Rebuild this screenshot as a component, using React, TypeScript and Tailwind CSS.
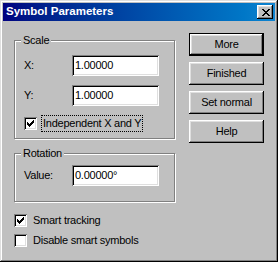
import React from "react";

const font = { fontFamily: '"Liberation Sans", Arial, sans-serif' };

const raised =
  "shadow-[inset_-1px_-1px_#000,inset_1px_1px_#fff,inset_-2px_-2px_#808080,inset_2px_2px_#dfdfdf]";
const sunken =
  "shadow-[inset_1px_1px_#808080,inset_-1px_-1px_#fff,inset_2px_2px_#000,inset_-2px_-2px_#dfdfdf]";

function CloseGlyph() {
  // classic 8x7 pixel "x"
  const rows = ["11000011", "01100110", "00111100", "00011000", "00111100", "01100110", "11000011"];
  return (
    <svg width="8" height="7" shapeRendering="crispEdges">
      {rows.map((r, y) =>
        r.split("").map((c, x) => (c === "1" ? <rect key={`${x}-${y}`} x={x} y={y} width="1" height="1" fill="#000" /> : null))
      )}
    </svg>
  );
}

function CheckGlyph() {
  const rows = ["0000001", "0000011", "1000111", "1101110", "1111100", "0111000", "0010000"];
  return (
    <svg width="7" height="7" shapeRendering="crispEdges">
      {rows.map((r, y) =>
        r.split("").map((c, x) => (c === "1" ? <rect key={`${x}-${y}`} x={x} y={y} width="1" height="1" fill="#000" /> : null))
      )}
    </svg>
  );
}

function Checkbox({ checked, label, focused }: { checked: boolean; label: string; focused?: boolean }) {
  return (
    <div className="flex items-center h-[17px]">
      <div className={`w-[13px] h-[13px] bg-white flex items-center justify-center ${sunken}`}>
        {checked && <CheckGlyph />}
      </div>
      <span
        className={`ml-[4px] px-[1px] leading-[15px] border ${focused ? "border-dotted border-black" : "border-transparent"}`}
      >
        {label}
      </span>
    </div>
  );
}

function Field({ label, value }: { label: string; value: string }) {
  return (
    <div className="flex items-center h-[21px]">
      <span className="w-[48px]">{label}</span>
      <div className={`w-[87px] h-[21px] bg-white flex items-center pl-[3px] ${sunken}`}>{value}</div>
    </div>
  );
}

function GroupBox({ title, className, children }: { title: string; className: string; children: React.ReactNode }) {
  return (
    <div className={`relative border border-[#808080] shadow-[inset_1px_1px_#fff,1px_1px_#fff] ${className}`}>
      <span className="absolute -top-[8px] left-[6px] px-[2px] bg-[#c0c0c0] leading-[14px]">{title}</span>
      {children}
    </div>
  );
}

function Button({ label, isDefault }: { label: string; isDefault?: boolean }) {
  return (
    <div
      className={`w-[75px] h-[23px] flex items-center justify-center bg-[#c0c0c0] ${raised} ${
        isDefault ? "border border-black" : ""
      }`}
    >
      {label}
    </div>
  );
}

export default function App() {
  return (
    <div
      className="w-[278px] h-[262px] bg-[#c0c0c0] p-[3px] flex flex-col text-[11px] tracking-[-0.25px] text-black shadow-[inset_-1px_-1px_#000,inset_1px_1px_#dfdfdf,inset_-2px_-2px_#808080,inset_2px_2px_#fff]"
      style={font}
    >
      <div className="h-[18px] flex items-center justify-between pl-[3px] pr-[2px] bg-gradient-to-r from-[#000080] to-[#1084d0]">
        <span className="text-white font-bold text-[11.5px] tracking-normal">Symbol Parameters</span>
        <div className={`w-[16px] h-[14px] bg-[#c0c0c0] flex items-center justify-center pl-[1px] ${raised}`}>
          <CloseGlyph />
        </div>
      </div>

      <div className="flex pt-[12px] pl-[11px]">
        <div className="w-[161px] mt-[7px] flex flex-col">
          <GroupBox title="Scale" className="h-[99px] pl-[9px] pt-[14px]">
            <Field label="X:" value="1.00000" />
            <div className="mt-[9px]">
              <Field label="Y:" value="1.00000" />
            </div>
            <div className="mt-[9px]">
              <Checkbox checked label="Independent X and Y" focused />
            </div>
          </GroupBox>

          <GroupBox title="Rotation" className="mt-[14px] h-[49px] pl-[9px] pt-[11px]">
            <Field label="Value:" value="0.00000°" />
          </GroupBox>

          <div className="mt-[10px]">
            <Checkbox checked label="Smart tracking" />
          </div>
          <div className="mt-[3px]">
            <Checkbox checked={false} label="Disable smart symbols" />
          </div>
        </div>

        <div className="ml-[14px] flex flex-col gap-[6px]">
          <Button label="More" isDefault />
          <Button label="Finished" />
          <Button label="Set normal" />
          <Button label="Help" />
        </div>
      </div>
    </div>
  );
}
